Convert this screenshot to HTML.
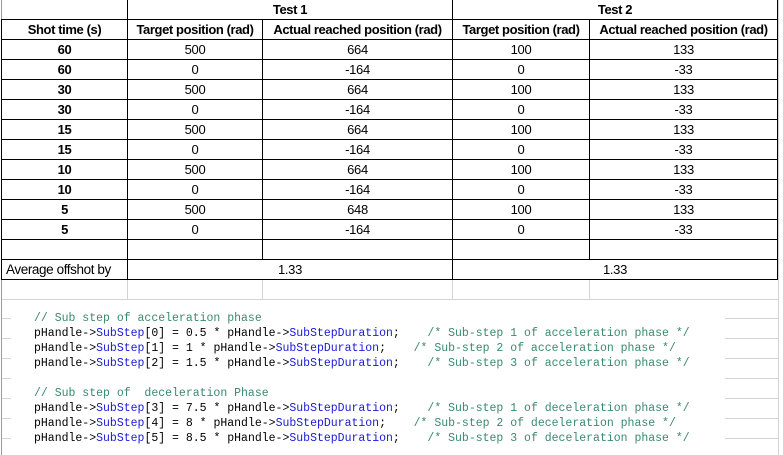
<!DOCTYPE html>
<html><head><meta charset="utf-8"><style>
body{margin:0;width:783px;height:455px;background:#fff;position:relative;overflow:hidden;font-family:"Liberation Sans",Arial,sans-serif}
table{position:absolute;left:1px;top:0;border-collapse:collapse;table-layout:fixed}
td{height:19px;padding:0;border:1px solid #000;text-align:center;font-size:13px;letter-spacing:-0.3px;white-space:nowrap;overflow:hidden;line-height:19px}
tr.h td,td.b{font-weight:bold;font-size:13px;letter-spacing:-0.4px}
.lg{position:absolute;background:#d4d4d4}
pre{position:absolute;left:34px;top:311px;margin:0;font-family:"Liberation Mono",monospace;font-size:11.5px;line-height:15px;color:#000}
.c{color:#3a8a6e}.k{color:#1a1ad8}
</style></head><body>
<div class="lg" style="left:1px;top:0;width:1px;height:455px;background:#9a9a9a"></div>
<div class="lg" style="left:778px;top:0;width:1px;height:455px"></div>
<table>
<colgroup><col style="width:126px"><col style="width:135px"><col style="width:190px"><col style="width:137px"><col style="width:188px"></colgroup>
<tr class="h"><td style="border-top:none;border-left:none"></td><td colspan="2" style="border-top:none">Test 1</td><td colspan="2" style="border-top:none">Test 2</td></tr>
<tr class="h"><td>Shot time (s)</td><td>Target position (rad)</td><td>Actual reached position (rad)</td><td>Target position (rad)</td><td>Actual reached position (rad)</td></tr>
<tr><td class="b">60</td><td>500</td><td>664</td><td>100</td><td>133</td></tr>
<tr><td class="b">60</td><td>0</td><td>-164</td><td>0</td><td>-33</td></tr>
<tr><td class="b">30</td><td>500</td><td>664</td><td>100</td><td>133</td></tr>
<tr><td class="b">30</td><td>0</td><td>-164</td><td>0</td><td>-33</td></tr>
<tr><td class="b">15</td><td>500</td><td>664</td><td>100</td><td>133</td></tr>
<tr><td class="b">15</td><td>0</td><td>-164</td><td>0</td><td>-33</td></tr>
<tr><td class="b">10</td><td>500</td><td>664</td><td>100</td><td>133</td></tr>
<tr><td class="b">10</td><td>0</td><td>-164</td><td>0</td><td>-33</td></tr>
<tr><td class="b">5</td><td>500</td><td>648</td><td>100</td><td>133</td></tr>
<tr><td class="b">5</td><td>0</td><td>-164</td><td>0</td><td>-33</td></tr>
<tr><td></td><td></td><td></td><td></td><td></td></tr>
<tr><td style="text-align:left;padding-left:4px;font-size:13.5px;letter-spacing:-0.4px">Average offshot by</td><td colspan="2">1.33</td><td colspan="2">1.33</td></tr>
<tr><td style="border:none;border-right:1px solid #d4d4d4;border-bottom:1px solid #d4d4d4"></td><td style="border:none;border-right:1px solid #d4d4d4;border-bottom:1px solid #d4d4d4"></td><td style="border:none;border-right:1px solid #d4d4d4;border-bottom:1px solid #d4d4d4"></td><td style="border:none;border-right:1px solid #d4d4d4;border-bottom:1px solid #d4d4d4"></td><td style="border:none;border-bottom:1px solid #d4d4d4"></td></tr>
</table>
<div class="lg" style="left:2px;top:318px;width:9px;height:1px"></div>
<div class="lg" style="left:2px;top:338px;width:9px;height:1px"></div>
<div class="lg" style="left:2px;top:358px;width:9px;height:1px"></div>
<div class="lg" style="left:2px;top:378px;width:9px;height:1px"></div>
<div class="lg" style="left:2px;top:398px;width:9px;height:1px"></div>
<div class="lg" style="left:2px;top:418px;width:9px;height:1px"></div>
<div class="lg" style="left:2px;top:438px;width:9px;height:1px"></div>
<div class="lg" style="left:725px;top:318px;width:53px;height:1px"></div>
<div class="lg" style="left:725px;top:338px;width:53px;height:1px"></div>
<div class="lg" style="left:725px;top:358px;width:53px;height:1px"></div>
<div class="lg" style="left:725px;top:378px;width:53px;height:1px"></div>
<div class="lg" style="left:725px;top:398px;width:53px;height:1px"></div>
<div class="lg" style="left:725px;top:418px;width:53px;height:1px"></div>
<div class="lg" style="left:725px;top:438px;width:53px;height:1px"></div>
<pre><span class="c">// Sub step of acceleration phase</span>
pHandle-&gt;<span class="k">SubStep</span>[0] = 0.5 * pHandle-&gt;<span class="k">SubStepDuration</span>;    <span class="c">/* Sub-step 1 of acceleration phase */</span>
pHandle-&gt;<span class="k">SubStep</span>[1] = 1 * pHandle-&gt;<span class="k">SubStepDuration</span>;    <span class="c">/* Sub-step 2 of acceleration phase */</span>
pHandle-&gt;<span class="k">SubStep</span>[2] = 1.5 * pHandle-&gt;<span class="k">SubStepDuration</span>;    <span class="c">/* Sub-step 3 of acceleration phase */</span>

<span class="c">// Sub step of  deceleration Phase</span>
pHandle-&gt;<span class="k">SubStep</span>[3] = 7.5 * pHandle-&gt;<span class="k">SubStepDuration</span>;    <span class="c">/* Sub-step 1 of deceleration phase */</span>
pHandle-&gt;<span class="k">SubStep</span>[4] = 8 * pHandle-&gt;<span class="k">SubStepDuration</span>;    <span class="c">/* Sub-step 2 of deceleration phase */</span>
pHandle-&gt;<span class="k">SubStep</span>[5] = 8.5 * pHandle-&gt;<span class="k">SubStepDuration</span>;    <span class="c">/* Sub-step 3 of deceleration phase */</span></pre>
</body></html>
